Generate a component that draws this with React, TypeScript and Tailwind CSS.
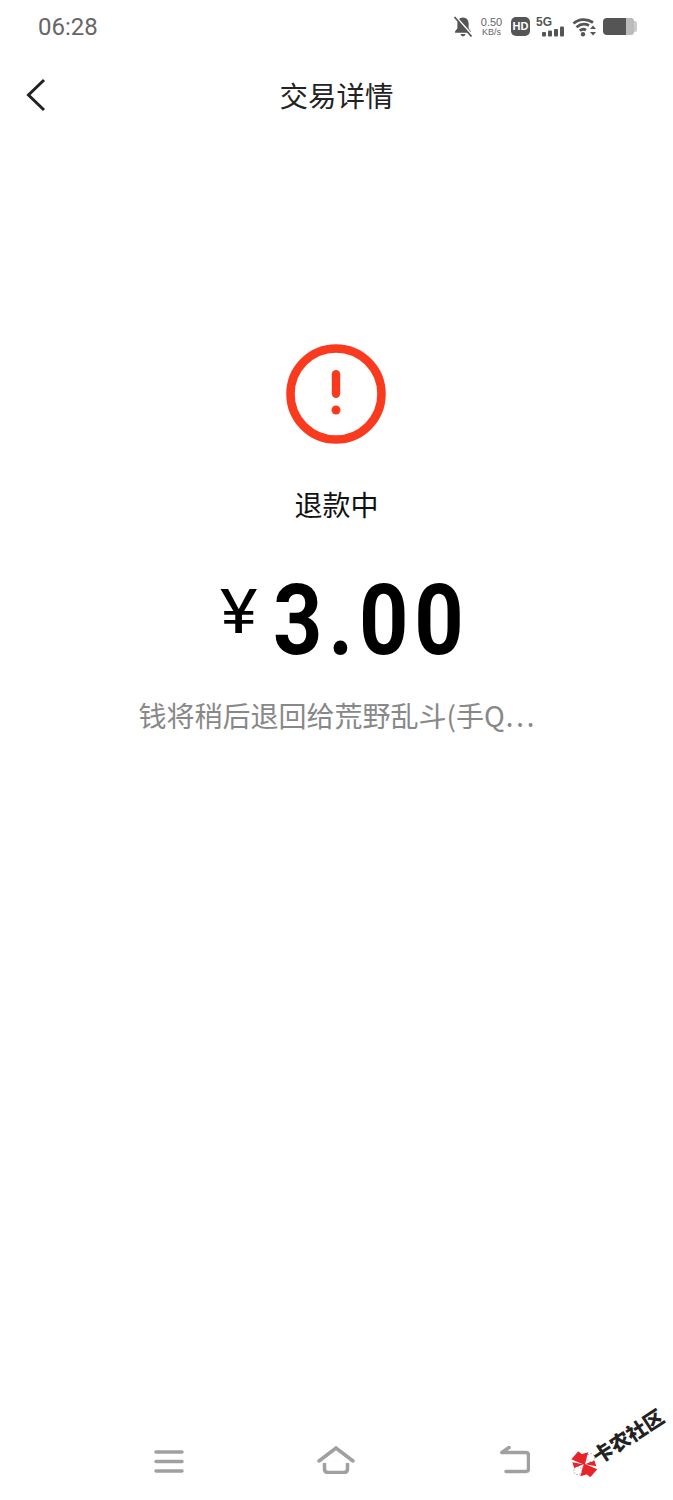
export default function App() {
  const cjk = { fontFamily: '"Noto Sans CJK SC", sans-serif' };
  return (
    <div className="relative flex h-[1500px] w-[673px] flex-col overflow-hidden bg-white" style={cjk}>
      {/* status bar */}
      <div className="flex h-[53px] items-center justify-between pl-[38px] pr-[36px]">
        <span className="text-[24px] leading-none text-[#666]" style={{ fontFamily: 'Roboto, sans-serif' }}>06:28</span>
        <div className="flex items-center text-[#555]">
          <svg width="20" height="22" viewBox="0 0 20 22" className="mr-[6px]">
            <path d="M10 1.500c-3.600 0-5.600 2.800-5.600 6v4.800L2 15.500v1.300h16v-1.300l-2.400-3.200V7.500c0-3.200-2-6-5.600-6z" fill="#555" />
            <path d="M7.500 18h5c-.4 1.500-1.300 2.300-2.500 2.300s-2.100-.8-2.500-2.300z" fill="#555" />
            <path d="M2.800 1 20 20" stroke="#fff" strokeWidth="2" />
            <path d="M1.500 1 18.500 20.500" stroke="#555" strokeWidth="1.800" />
          </svg>
          <div className="mr-[7px] flex w-[25px] flex-col items-center leading-none" style={{ fontFamily: '"Liberation Sans", sans-serif' }}>
            <span className="text-[11px] leading-[11px] text-[#666]">0.50</span>
            <span className="text-[9px] leading-[9px] text-[#666]">KB/s</span>
          </div>
          <div className="mr-[6px] flex h-[19px] w-[19px] items-center justify-center rounded-[5px] bg-[#555] text-[11px] font-bold leading-none text-white" style={{ fontFamily: '"Liberation Sans", sans-serif' }}>HD</div>
          <div className="mr-[7px] flex h-[20px] w-[29px] flex-col justify-between">
            <span className="text-[12px] font-bold leading-[10px] text-[#555]" style={{ fontFamily: '"Liberation Sans", sans-serif' }}>5G</span>
            <svg width="29" height="11" viewBox="0 0 29 11" className="-mt-[1px]">
              <rect x="6" y="6" width="4" height="4.500" rx="1" fill="#555" />
              <rect x="12" y="4.500" width="4" height="6" rx="1" fill="#555" />
              <rect x="18" y="3" width="4" height="7.500" rx="1" fill="#555" />
              <rect x="24" y="0.500" width="4" height="10" rx="1" fill="#555" />
            </svg>
          </div>
          <svg width="25" height="20" viewBox="0 0 25 20" className="mr-[6px]">
            <path d="M1.500 6.500C7 1.500 15 1.500 21 5.500" stroke="#555" strokeWidth="2.800" fill="none" />
            <path d="M4.500 10.200C8.500 6.800 13 6.500 17 8.500" stroke="#555" strokeWidth="2.800" fill="none" />
            <path d="M7.800 13.700c2-1.700 4.300-1.800 6.200-.6" stroke="#555" strokeWidth="2.800" fill="none" />
            <circle cx="11" cy="17.300" r="2.200" fill="#555" />
            <path d="M21 8.500l3 3.500h-6zM21 18.500l3-3.500h-6z" fill="#555" />
          </svg>
          <div className="flex items-center">
            <div className="h-[17px] w-[23px] rounded-l-[4px] bg-[#555]" />
            <div className="h-[17px] w-[8px] rounded-r-[3px] bg-[#bbb]" />
            <div className="h-[11px] w-[3px] rounded-r-[2px] bg-[#ccc]" />
          </div>
        </div>
      </div>

      {/* header */}
      <div className="relative flex h-[86px] items-center justify-center">
        <svg width="20" height="34" viewBox="0 0 20 34" className="absolute left-[26px] top-[25px]">
          <path d="M18 2 2.500 17 18 32" fill="none" stroke="#222" strokeWidth="3" />
        </svg>
        <span className="-mt-[2px] text-[28.500px] leading-none text-[#222]">交易详情</span>
      </div>

      {/* content */}
      <div className="flex flex-col items-center pt-[205px]">
        <svg width="100" height="100" viewBox="0 0 100 100" className="-ml-[1px]">
          <circle cx="50" cy="50" r="45.500" fill="none" stroke="#fa3a1e" strokeWidth="8.500" />
          <rect x="45.800" y="26" width="8.400" height="28" rx="4.200" fill="#fa3a1e" />
          <circle cx="50" cy="66" r="4.500" fill="#fa3a1e" />
        </svg>
        <span className="mt-[46px] text-[28px] leading-[28px] text-[#111]">退款中</span>
        <div className="ml-[16px] mt-[53px] flex h-[100px] items-center text-black" style={{ fontFamily: 'Roboto, sans-serif' }}>
          <span className="-mt-[18px] mr-[20px] origin-left scale-x-[1.15] text-[62px] font-normal leading-none">¥</span>
          <span className="-mr-[27px] origin-left scale-x-[0.88] text-[98px] font-bold leading-none tracking-[6.500px]">3.00</span>
        </div>
        <span className="mt-[30px] text-[28px] leading-[28px] text-[#888]">钱将稍后退回给荒野乱斗(手Q…</span>
      </div>

      {/* navigation */}
      <div className="mt-auto flex h-[58px] items-start pl-[154px] pt-[5px]">
        <svg width="30" height="25" viewBox="0 0 30 25" className="mt-[2px]">
          <path d="M2 3h26M2 12.500h26M2 22h26" stroke="#a0a0a0" strokeWidth="3.500" strokeLinecap="round" />
        </svg>
        <svg width="38" height="28" viewBox="0 0 38 28" className="-mt-[1px] ml-[133px]">
          <path d="M2 15 19 2 36 15" fill="none" stroke="#a0a0a0" strokeWidth="3.500" strokeLinecap="round" />
          <path d="M7.500 17v6c0 2.500 1.500 3.500 3.500 3.500h16c2 0 3.500-1 3.500-3.500v-6" fill="none" stroke="#a0a0a0" strokeWidth="3.500" />
        </svg>
        <svg width="30" height="28" viewBox="0 0 30 28" className="-mt-[1px] ml-[145px]">
          <path d="M2 6.500h24c1.500 0 2.500 1 2.500 2.500v14c0 1.500-1 2.500-2.500 2.500H6" fill="none" stroke="#a0a0a0" strokeWidth="3.500" strokeLinecap="round" />
          <path d="M9 1.500 2 6.500" fill="none" stroke="#a0a0a0" strokeWidth="3.500" strokeLinecap="round" />
        </svg>
      </div>

      {/* watermark */}
      <div className="absolute left-[564px] top-[1429px] flex origin-center -rotate-[33deg] items-center whitespace-nowrap">
        <svg width="28" height="28" viewBox="0 0 28 28" className="-mr-[2px]">
          <g transform="rotate(33 14 14)">
            <path d="M15 15 1 9 8 1 14 6zM13 13l14 6-7 8-6-5z" fill="#e8232a" />
            <path d="M15 13 18 2l-7 2zM13 15l-3 11 7-2zM15 14l9-4 2 6zM13 14l-9 4-2-6z" fill="#e8232a" />
            <circle cx="20.500" cy="7.500" r="4" fill="#fff" stroke="#777" strokeWidth="0.700" strokeDasharray="1.500 1.500" />
            <circle cx="7.500" cy="20.500" r="4" fill="#fff" stroke="#777" strokeWidth="0.700" strokeDasharray="1.500 1.500" />
          </g>
        </svg>
        <span className="text-[20px] font-black leading-none text-[#222]">卡农社区</span>
      </div>
    </div>
  );
}
